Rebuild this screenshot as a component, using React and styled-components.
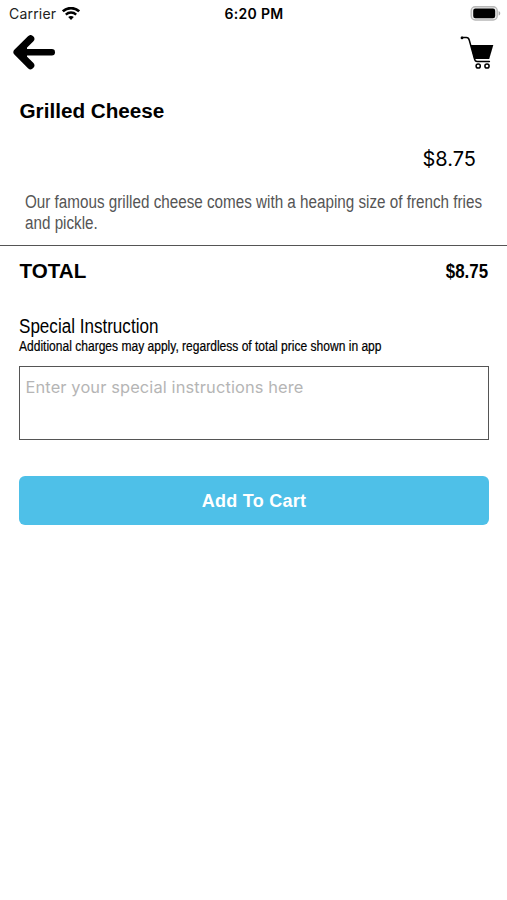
import React, { useState } from "react";
import styled, { createGlobalStyle } from "styled-components";

function App() {
  const [instructions, setInstructions] = useState("");

  return (
    <>
      <GlobalStyle />
      <Screen>
        <StatusBar>
          <Carrier>
            <CarrierName>Carrier</CarrierName>
            <WifiIcon />
          </Carrier>
          <Clock>6:20 PM</Clock>
          <BatteryIcon />
        </StatusBar>

        <Header>
          <IconButton aria-label="Back">
            <BackIcon />
          </IconButton>
          <IconButton aria-label="Cart">
            <CartIcon />
          </IconButton>
        </Header>

        <Item>
          <ItemName>Grilled Cheese</ItemName>
          <ItemPrice>$8.75</ItemPrice>
          <Description $scale={0.846}>
            Our famous grilled cheese comes with a heaping size of french fries
            and pickle.
          </Description>
        </Item>

        <Total>
          <TotalLabel>TOTAL</TotalLabel>
          <TotalPrice $scale={0.845}>$8.75</TotalPrice>
        </Total>

        <Special>
          <SpecialTitle $scale={0.853}>Special Instruction</SpecialTitle>
          <SpecialNote $scale={0.86}>
            Additional charges may apply, regardless of total price shown in app
          </SpecialNote>
          <SpecialInput
            placeholder="Enter your special instructions here"
            value={instructions}
            onChange={(e) => setInstructions(e.target.value)}
          />
          <AddButton>Add To Cart</AddButton>
        </Special>
      </Screen>
    </>
  );
}

export default App;

const WifiIcon = () => (
  <svg width="18" height="14" viewBox="0 0 18 14" fill="none">
    <path d="M0.8 4.4C5.3 0 12.7 0 17.2 4.4" stroke="#000" strokeWidth="2.6" />
    <path d="M3.8 7.6C6.7 4.8 11.3 4.8 14.2 7.6" stroke="#000" strokeWidth="2.3" />
    <path d="M9 13L6.2 10.1C7.8 8.6 10.2 8.6 11.8 10.1Z" fill="#000" />
  </svg>
);

const BatteryIcon = () => (
  <svg width="31" height="16" viewBox="0 0 31 16">
    <rect x="1.2" y="0.8" width="26" height="13.2" rx="4" fill="#eee" stroke="#b8b8b8" strokeWidth="1.4" />
    <rect x="3.2" y="2.6" width="22" height="9.6" rx="2.2" fill="#000" />
    <path d="M28.6 5C30.8 5.8 30.8 8.8 28.6 9.6Z" fill="#a8a8a8" />
  </svg>
);

const BackIcon = () => (
  <svg width="43" height="36" viewBox="0 0 43 36" fill="none">
    <path d="M5 17.2H38.8" stroke="#000" strokeWidth="6.4" strokeLinecap="round" />
    <path
      d="M17.6 3.9L4.2 17.2L17.6 30.5"
      stroke="#000"
      strokeWidth="7.4"
      strokeLinecap="round"
      strokeLinejoin="round"
    />
    <path d="M4 17.2L14 8.7V25.7Z" fill="#000" />
  </svg>
);

const CartIcon = () => (
  <svg width="34" height="34" viewBox="0 0 34 34" fill="none">
    <path
      d="M1.8 1.6H6.4C8.2 1.6 8.8 2.4 9.3 4.2L14.4 22.6C14.8 24.5 15.4 25.6 17.2 25.6H29.4"
      stroke="#000"
      strokeWidth="1.5"
      strokeLinecap="round"
    />
    <circle cx="2" cy="1.9" r="1.4" fill="#000" />
    <path d="M10.6 9H33.3L29.2 23H14.2Z" fill="#000" />
    <circle cx="18.2" cy="30" r="2.1" stroke="#000" strokeWidth="1.5" />
    <circle cx="27" cy="30" r="2.1" stroke="#000" strokeWidth="1.5" />
  </svg>
);

const GlobalStyle = createGlobalStyle`
  body {
    margin: 0;
    background: #fff;
  }

  * {
    box-sizing: border-box;
  }
`;

const Screen = styled.div`
  width: 100%;
  height: 900px;
  overflow: hidden;
  background: #fff;
  color: #000;
  font-family: "Liberation Sans", sans-serif;
`;

/* regular face squeezed horizontally to look like a condensed one */
const CondensedText = styled.div`
  transform: scaleX(${(props) => props.$scale});
  transform-origin: left center;
`;

const StatusBar = styled.div`
  display: grid;
  grid-template-columns: 1fr auto 1fr;
  align-items: center;
  height: 27px;
  padding: 0 8px 0 9px;
  font-family: Inter, sans-serif;

  > :last-child {
    justify-self: end;
    margin-right: -2px;
  }
`;

const Carrier = styled.div`
  display: flex;
  align-items: center;
  gap: 6px;
`;

const CarrierName = styled.span`
  color: #222;
  font-size: 14px;
  letter-spacing: 0.2px;
`;

const Clock = styled.span`
  font-size: 14px;
  font-weight: 600;
  letter-spacing: 0.3px;
`;

const Header = styled.div`
  display: flex;
  justify-content: space-between;
  align-items: center;
  height: 51px;
  padding: 0 13px;
`;

const IconButton = styled.button`
  display: flex;
  padding: 0;
  border: none;
  background: none;
  cursor: pointer;
`;

const Item = styled.div`
  display: flex;
  flex-direction: column;
  height: 168px;
  padding-top: 20px;
  border-bottom: 1px solid #555;
`;

const ItemName = styled.div`
  padding-left: 19.5px;
  font-size: 20.7px;
  font-weight: bold;
  line-height: 26px;
`;

const ItemPrice = styled.div`
  margin-top: 22px;
  padding-right: 31px;
  text-align: right;
  font-family: Inter, sans-serif;
  font-size: 20px;
  line-height: 26px;
`;

const Description = styled(CondensedText)`
  width: 545px;
  margin: 20px 0 0 25.4px;
  color: #555;
  font-size: 18px;
  line-height: 21px;
`;

const Total = styled.div`
  display: flex;
  justify-content: space-between;
  align-items: center;
  height: 50px;
  padding: 0 18.5px 0 19.5px;
`;

const TotalLabel = styled.span`
  font-size: 20.6px;
  font-weight: bold;
`;

const TotalPrice = styled(CondensedText)`
  transform-origin: right center;
  padding-top: 1px;
  font-size: 20px;
  font-weight: bold;
`;

const Special = styled.div`
  display: flex;
  flex-direction: column;
  padding: 18px 18px 0 19px;
`;

const SpecialTitle = styled(CondensedText)`
  font-size: 20px;
  line-height: 24px;
`;

const SpecialNote = styled(CondensedText)`
  font-size: 14px;
  line-height: 17px;
  white-space: nowrap;
  -webkit-text-stroke: 0.2px #000;
`;

const SpecialInput = styled.textarea`
  height: 74px;
  margin-top: 11px;
  padding: 9px 5.5px;
  border: 1px solid #555;
  border-radius: 0;
  outline: none;
  resize: none;
  font-family: Inter, sans-serif;
  font-size: 16.4px;
  letter-spacing: 0.13px;
  line-height: 22px;

  &::placeholder {
    color: #b5b5b5;
  }
`;

const AddButton = styled.button`
  height: 49px;
  margin-top: 36px;
  padding: 2px 0 0;
  border: none;
  border-radius: 6px;
  background: #4ec0e8;
  color: #fff;
  font-family: "Liberation Sans", sans-serif;
  font-size: 18px;
  font-weight: bold;
  letter-spacing: 0.25px;
  cursor: pointer;
`;
